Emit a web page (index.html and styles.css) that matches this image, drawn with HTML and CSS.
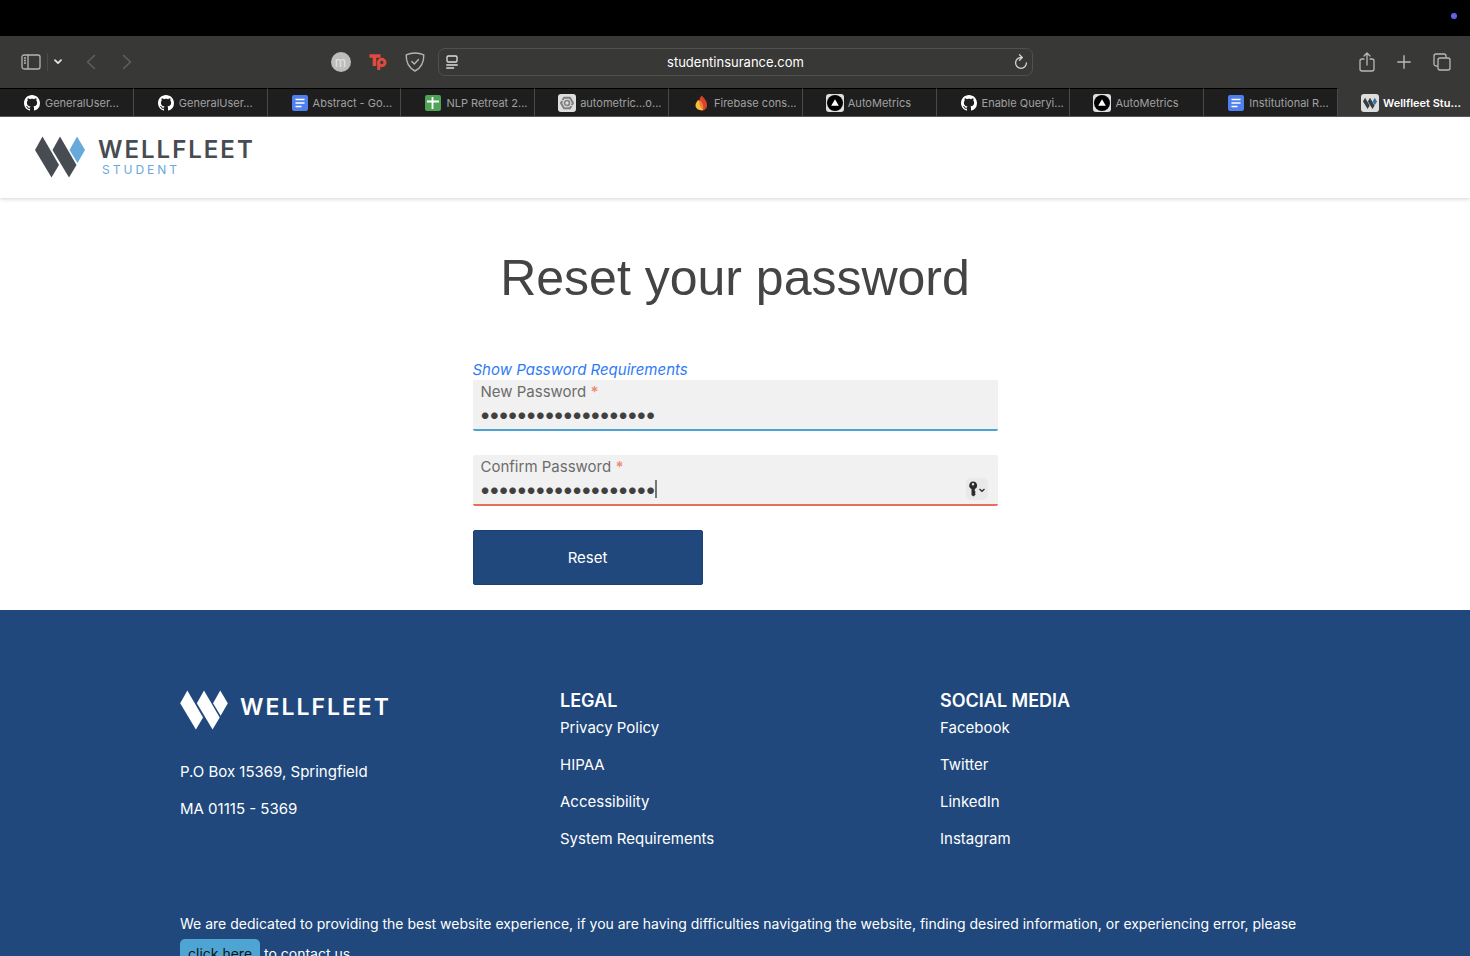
FILE: index.html
```
<!DOCTYPE html>
<html lang="en">
<head>
<meta charset="utf-8">
<title>Wellfleet Student</title>
<link rel="stylesheet" href="styles.css">
</head>
<body>
<svg class="symbols" aria-hidden="true">
  <symbol id="github" viewBox="0 0 16 16"><path fill="#fff" d="M8 0C3.58 0 0 3.58 0 8c0 3.54 2.29 6.53 5.47 7.59.4.07.55-.17.55-.38 0-.19-.01-.82-.01-1.49-2.01.37-2.53-.49-2.69-.94-.09-.23-.48-.94-.82-1.13-.28-.15-.68-.52-.01-.53.63-.01 1.08.58 1.23.82.72 1.21 1.87.87 2.33.66.07-.52.28-.87.51-1.07-1.78-.2-3.64-.89-3.64-3.95 0-.87.31-1.59.82-2.15-.08-.2-.36-1.02.08-2.12 0 0 .67-.21 2.2.82.64-.18 1.32-.27 2-.27s1.36.09 2 .27c1.53-1.04 2.2-.82 2.2-.82.44 1.1.16 1.92.08 2.12.51.56.82 1.27.82 2.15 0 3.07-1.87 3.75-3.65 3.95.29.25.54.73.54 1.48 0 1.07-.01 1.93-.01 2.2 0 .21.15.46.55.38A8.01 8.01 0 0 0 16 8c0-4.42-3.58-8-8-8z"/></symbol>
  <symbol id="doc" viewBox="0 0 16 16"><rect width="16" height="16" rx="2" fill="#4f80ee"/><path d="M3.5 4.5h9M3.5 8h9M3.5 11.5h6" stroke="#fff" stroke-width="1.6"/></symbol>
  <symbol id="sheet" viewBox="0 0 16 16"><rect width="16" height="16" rx="2" fill="#4fa357"/><path d="M2 6.5h12M7.5 2v12" stroke="#fff" stroke-width="1.8"/></symbol>
  <symbol id="hex" viewBox="0 0 18 18"><rect width="18" height="18" rx="3" fill="#dedede"/><path d="M6 3.8h6L15 9l-3 5.200H6L3 9z" fill="none" stroke="#808080" stroke-width="2" stroke-linejoin="round"/><circle cx="9" cy="9" r="2.500" fill="none" stroke="#808080" stroke-width="1.700"/><path d="M3 6l3 1M15 12l-3-1" stroke="#dedede"/></symbol>
  <symbol id="flame" viewBox="0 0 16 16"><path d="M8.500.5c3 3 5.500 5.500 5.500 9.500a5 5 0 0 1-8 4.500C6 10 5 5 8.500.5z" fill="#d8432a"/><path d="M5 5c2 1 5 4 5 10C6 16 2.500 13.500 2.500 10.500 2.500 8 4 7 5 5z" fill="#f6bd3d"/><path d="M6.500 5c3 2.500 4.500 6 3.500 9.500C8 13 5.500 10 6.500 5z" fill="#ee8130"/></symbol>
  <symbol id="vertex" viewBox="0 0 18 18"><rect width="18" height="18" rx="3" fill="#dedede"/><circle cx="9" cy="9" r="8" fill="#000"/><path d="M9 5.200l3.800 6.500H5.200z" fill="#fff"/></symbol>
  <symbol id="mark" viewBox="0 0 50 42"><path d="M7.500.5L24 29l-7.500 12.500L0 14z"/><path d="M25 .5L41.500 29 34 41.500 17.500 14z"/><path class="tip" d="M42 .5L50 14l-7.500 13L34.500 14z"/></symbol>
</svg>

<div class="menubar"><span class="dot"></span></div>

<div class="toolbar">
  <div class="tools tools-left">
    <button class="tool" aria-label="Sidebar"><svg width="20" height="16" viewBox="0 0 20 16" fill="none" stroke="#b4b4b2" stroke-width="1.300"><rect x="1" y="1" width="18" height="14" rx="2"/><path d="M7 1v14M3 4h2M3 6.500h2M3 9h2"/></svg></button>
    <span class="rule"></span>
    <button class="tool chev" aria-label="Tab groups"><svg width="8" height="6" viewBox="0 0 8 6" fill="none" stroke="#e4e4e2" stroke-width="1.700" stroke-linecap="round" stroke-linejoin="round"><path d="M1 1.200l3 3 3-3"/></svg></button>
    <button class="tool back" aria-label="Back"><svg width="10" height="16" viewBox="0 0 10 16" fill="none" stroke="#60605e" stroke-width="1.500" stroke-linecap="round" stroke-linejoin="round"><path d="M8.500 1.500L1.500 8l7 6.500"/></svg></button>
    <button class="tool" aria-label="Forward"><svg width="10" height="16" viewBox="0 0 10 16" fill="none" stroke="#60605e" stroke-width="1.500" stroke-linecap="round" stroke-linejoin="round"><path d="M1.500 1.500l7 6.500-7 6.500"/></svg></button>
    <div class="extensions">
      <button class="tool avatar">m</button>
      <button class="tool" aria-label="Tp extension"><svg width="18" height="18" viewBox="0 0 18 18" fill="none" stroke="#e04a3f"><path d="M.5 3h11M5.500 3v10" stroke-width="3.600"/><circle cx="12.800" cy="9.500" r="3.200" stroke-width="3"/><path d="M9.700 8.500V17" stroke-width="3"/></svg></button>
      <button class="tool" aria-label="Shield"><svg width="20" height="20" viewBox="0 0 20 20" fill="none" stroke="#b4b4b2" stroke-width="1.400" stroke-linejoin="round" stroke-linecap="round"><path d="M10 1C7 1 4 1.600 1.200 2.800 1 10 3 15.500 10 19c7-3.500 9-9 8.800-16.200C16 1.600 13 1 10 1z"/><path d="M6.800 9.500l2.500 2.500 4.200-4.500"/></svg></button>
    </div>
  </div>
  <div class="address">
    <svg width="12" height="14" viewBox="0 0 12 14" fill="none" stroke="#deded9" stroke-width="1.300" stroke-linecap="round"><rect x="1" y="1" width="10" height="6" rx="1.200"/><path d="M.7 10h10.600M.7 13h7"/></svg>
    <input class="url" aria-label="Address" value="studentinsurance.com">
    <button class="tool" aria-label="Reload"><svg width="14" height="16" viewBox="0 0 14 16" fill="none" stroke="#d4d4d2" stroke-width="1.300" stroke-linecap="round" stroke-linejoin="round"><path d="M7 3.500a5.400 5.400 0 1 0 5.400 5.400M5.500.8L8.300 3.500 5.500 6.200"/></svg></button>
  </div>
  <div class="tools tools-right">
    <button class="tool" aria-label="Share"><svg width="16" height="20" viewBox="0 0 16 20" fill="none" stroke="#b8b8b6" stroke-width="1.300" stroke-linecap="round" stroke-linejoin="round"><path d="M5 7H3a2 2 0 0 0-2 2v8a2 2 0 0 0 2 2h10a2 2 0 0 0 2-2V9a2 2 0 0 0-2-2h-2M8 13V1.200M5 4l3-3 3 3"/></svg></button>
    <button class="tool" aria-label="New tab"><svg width="14" height="14" viewBox="0 0 14 14" stroke="#b8b8b6" stroke-width="1.400" stroke-linecap="round"><path d="M7 .8v12.400M.8 7h12.400"/></svg></button>
    <button class="tool" aria-label="Tab overview"><svg width="18" height="18" viewBox="0 0 18 18" fill="none" stroke="#b8b8b6" stroke-width="1.300"><rect x="5" y="5" width="12" height="12" rx="2"/><path d="M4.500 13H3a2 2 0 0 1-2-2V3a2 2 0 0 1 2-2h8a2 2 0 0 1 2 2v1.500"/></svg></button>
  </div>
</div>

<nav class="tabs">
  <a class="tab" href="#"><svg class="small"><use href="#github"/></svg><span>GeneralUser...</span></a>
  <a class="tab" href="#"><svg class="small"><use href="#github"/></svg><span>GeneralUser...</span></a>
  <a class="tab" href="#"><svg class="small"><use href="#doc"/></svg><span>Abstract - Go...</span></a>
  <a class="tab" href="#"><svg class="small"><use href="#sheet"/></svg><span>NLP Retreat 2...</span></a>
  <a class="tab" href="#"><svg><use href="#hex"/></svg><span>autometric...o...</span></a>
  <a class="tab" href="#"><svg class="small"><use href="#flame"/></svg><span>Firebase cons...</span></a>
  <a class="tab" href="#"><svg><use href="#vertex"/></svg><span>AutoMetrics</span></a>
  <a class="tab" href="#"><svg class="small"><use href="#github"/></svg><span>Enable Queryi...</span></a>
  <a class="tab" href="#"><svg><use href="#vertex"/></svg><span>AutoMetrics</span></a>
  <a class="tab" href="#"><svg class="small"><use href="#doc"/></svg><span>Institutional R...</span></a>
  <a class="tab active" href="#"><svg viewBox="0 0 18 18"><rect width="18" height="18" rx="3" fill="#dedede"/><g transform="translate(2 3.500) scale(.28)" fill="#363e44"><path d="M7.500.5L24 29l-7.500 12.500L0 14z"/><path d="M25 .5L41.500 29 34 41.500 17.500 14z"/><path fill="#3474a8" d="M42 .5L50 14l-7.500 13L34.500 14z"/></g></svg><span>Wellfleet Stu...</span></a>
</nav>

<div class="page">
  <header class="site-header">
    <a class="brand" href="#">
      <svg class="brand-mark"><use href="#mark"/></svg>
      <span class="brand-text"><span class="brand-name">WELLFLEET</span><span class="brand-sub">STUDENT</span></span>
    </a>
  </header>

  <main class="main">
    <h1>Reset your password</h1>
    <form class="form">
      <a class="hint" href="#">Show Password Requirements</a>
      <div class="field">
        <label for="new">New Password <b>*</b></label>
        <input id="new" type="password" value="abcdefghijklmnopqrs">
      </div>
      <div class="field invalid">
        <label for="confirm">Confirm Password <b>*</b></label>
        <input id="confirm" type="password" value="abcdefghijklmnopqrs">
        <span class="caret"></span>
        <button class="key" type="button" aria-label="Saved passwords"><svg width="18" height="16" viewBox="0 0 18 16"><path fill="#2c2c2c" fill-rule="evenodd" d="M5 .5a4 4 0 0 1 1.800 7.600V10l1 1-1 1.200 1 1.100L5.500 15.500l-2-1.500V8.100A4 4 0 0 1 5 .5zM5 2a1.200 1.200 0 1 0 0 2.400A1.200 1.200 0 0 0 5 2z"/><path d="M11.500 8l2.500 2.300L16.500 8" fill="none" stroke="#2c2c2c" stroke-width="1.300"/></svg></button>
      </div>
      <button class="submit" type="button">Reset</button>
    </form>
  </main>

  <footer class="footer">
    <div class="container">
      <div class="columns">
        <section>
          <a class="brand footer-brand" href="#"><svg class="brand-mark"><use href="#mark"/></svg><span class="brand-name">WELLFLEET</span></a>
          <p>P.O Box 15369, Springfield</p>
          <p>MA 01115 - 5369</p>
        </section>
        <section>
          <h2>LEGAL</h2>
          <ul>
            <li><a href="#">Privacy Policy</a></li>
            <li><a href="#">HIPAA</a></li>
            <li><a href="#">Accessibility</a></li>
            <li><a href="#">System Requirements</a></li>
          </ul>
        </section>
        <section>
          <h2>SOCIAL MEDIA</h2>
          <ul>
            <li><a href="#">Facebook</a></li>
            <li><a href="#">Twitter</a></li>
            <li><a href="#">LinkedIn</a></li>
            <li><a href="#">Instagram</a></li>
          </ul>
        </section>
      </div>
      <p class="notice">We are dedicated to providing the best website experience, if you are having difficulties navigating the website, finding desired information, or experiencing error, please <a class="contact" href="#">click here</a> to contact us.</p>
    </div>
  </footer>
</div>
</body>
</html>
```
FILE: styles.css
```
* { box-sizing: border-box; }
body {
  margin: 0;
  height: 100vh;
  display: flex;
  flex-direction: column;
  overflow: hidden;
  background: #fff;
  font-family: Inter, "Liberation Sans", sans-serif;
  font-size: 15px;
}
a { color: inherit; text-decoration: none; }
button, input { font: inherit; }
p, h1, h2, ul { margin: 0; padding: 0; }
.symbols { display: none; }

.menubar {
  flex: none;
  height: 36px;
  padding: 13px 13px 0;
  background: #000;
  display: flex;
  justify-content: flex-end;
}
.dot { width: 6px; height: 6px; border-radius: 50%; background: #6461ec; }

.toolbar {
  flex: none;
  height: 52px;
  background: #383836;
  display: flex;
  align-items: center;
}
.tools { flex: 1; display: flex; align-items: center; }
.tool { padding: 0; border: 0; background: none; display: flex; align-items: center; justify-content: center; }
.tools-left { padding: 0 13px 0 21px; }
.rule { width: 1px; height: 18px; margin: 0 6px; background: #4a4a48; }
.back { margin: 0 26px 0 24px; }
.extensions { margin-left: auto; display: flex; align-items: center; gap: 18px; }
.avatar {
  width: 20px;
  height: 20px;
  border-radius: 50%;
  background: #bdbdbd;
  color: #e4e4e4;
  font-size: 13px;
  line-height: 18px;
}
.address {
  width: 595px;
  height: 28px;
  padding: 0 4px 0 7px;
  border: 1px solid #50504e;
  border-radius: 7px;
  display: flex;
  align-items: center;
}
.url {
  flex: 1;
  min-width: 0;
  padding: 0;
  border: 0;
  background: none;
  color: #fff;
  text-align: center;
  font-size: 13px;
}
.tools-right { justify-content: flex-end; gap: 22px; padding: 0 19px 0 15px; }

.tabs {
  flex: none;
  height: 29px;
  display: flex;
  background: #1e1e1e;
  border-bottom: 1px solid #5a5654;
}
.tab {
  flex: 1 1 0;
  min-width: 0;
  padding-left: 23px;
  display: flex;
  align-items: center;
  gap: 4px;
  overflow: hidden;
  white-space: nowrap;
  font-size: 11px;
  color: #a0a0a0;
  border-top: 1px solid #000;
  border-right: 1px solid #4a4a4a;
}
.tab svg { flex: none; width: 18px; height: 18px; }
.tab svg.small { padding: 1px; }
.tab.active { flex: none; width: 132px; background: #383836; border-color: #383836; color: #fff; font-weight: 600; }

.page { flex: 1; min-height: 0; overflow: hidden; }
.site-header {
  padding: 19px 35px 20px;
  box-shadow: 0 1px 4px rgba(0, 0, 0, .18);
}
.brand { display: flex; gap: 13px; color: #464c52; fill: #464c52; }
.brand-mark { flex: none; width: 50px; height: 42px; }
.site-header .brand-mark { --tip: #68a9dc; }
.tip { fill: var(--tip, #fff); }
.brand-text { display: flex; flex-direction: column; padding-top: 1px; }
.brand-name { font-size: 24px; line-height: 26px; font-weight: 600; letter-spacing: 2px; }
.brand-sub { margin-left: 4px; font-size: 12px; line-height: 14px; font-weight: 400; letter-spacing: 3px; color: #68a9dc; }

.main { padding: 50px 24px 25px; }
h1 {
  font-family: "Liberation Sans", sans-serif;
  font-size: 50px;
  line-height: 60px;
  font-weight: 400;
  text-align: center;
  color: #444;
}
.form {
  max-width: 525px;
  margin: 52px auto 0;
  display: flex;
  flex-direction: column;
  align-items: flex-start;
}
.hint { font-style: italic; line-height: 20px; color: #2f7bf5; }
.field {
  position: relative;
  width: 100%;
  height: 51px;
  margin-bottom: 24px;
  padding: 2px 8px 0;
  background: #f1f1f1;
  border-bottom: 2px solid #4ba3d3;
  border-radius: 2px;
}
.field.invalid { border-color: #e76f5a; }
.field label { display: block; line-height: 20px; color: #6c6c6c; }
.field b { font-weight: 600; color: #ee8a72; }
.field input {
  display: block;
  width: 100%;
  height: 24px;
  padding: 0;
  border: 0;
  outline: 0;
  background: none;
  color: #404040;
  font-size: 21px;
  font-weight: 800;
}
.caret { position: absolute; left: 182px; top: 25px; width: 2px; height: 18px; background: #777; }
.key {
  position: absolute;
  right: 10px;
  top: 23px;
  width: 22px;
  height: 22px;
  padding: 0;
  border: 0;
  border-radius: 5px;
  background: #e9e9e9;
  display: flex;
  align-items: center;
  justify-content: center;
}
.submit {
  width: 230px;
  height: 55px;
  border: 1px solid #1d4072;
  border-radius: 2px;
  background: #20487c;
  color: #fff;
}

.footer { padding-top: 80px; background: #20487c; color: #fff; }
.container { max-width: 1140px; margin: 0 auto; padding: 0 8px 40px 15px; }
.columns { display: grid; grid-template-columns: repeat(3, 1fr); column-gap: 30px; margin-right: 7px; }
.footer p, .footer li { line-height: 22px; margin-bottom: 15px; list-style: none; }
.footer h2 { font-size: 18px; line-height: 22px; font-weight: 600; margin-bottom: 5px; }
.footer-brand { gap: 12px; margin-bottom: 31px; color: #fff; fill: #fff; }
.footer-brand .brand-mark { width: 48px; height: 40px; }
.footer-brand .brand-name { font-size: 23px; line-height: 34px; }
.footer .notice { margin-top: 44px; font-size: 14px; line-height: 30px; }
.contact { display: inline-block; padding: 0 8px; border-radius: 5px; background: #4ea5d3; color: #111; }
```
